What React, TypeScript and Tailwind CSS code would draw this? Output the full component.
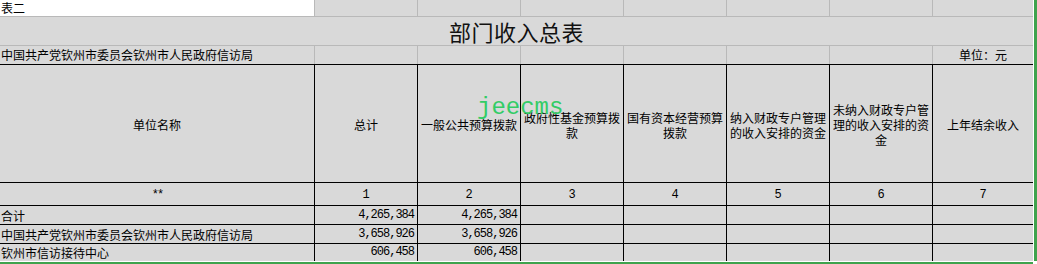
import React from "react";

const cjk = { fontFamily: '"Noto Sans CJK SC", "Noto Sans", sans-serif' };
const mono = { fontFamily: '"Liberation Mono", "DejaVu Sans Mono", monospace' };

// column widths incl. right border line
const widths = ["w-[315px]", "w-[103px]", "w-[103px]", "w-[103px]", "w-[103px]", "w-[103px]", "w-[103px]", "w-[100px]"];

const headers = [
  "单位名称",
  "总计",
  "一般公共预算拨款",
  "政府性基金预算拨款",
  "国有资本经营预算拨款",
  "纳入财政专户管理的收入安排的资金",
  "未纳入财政专户管理的收入安排的资金",
  "上年结余收入",
];

const rows = [
  { name: "合计", total: "4,265,384", general: "4,265,384" },
  { name: "中国共产党钦州市委员会钦州市人民政府信访局", total: "3,658,926", general: "3,658,926" },
  { name: "钦州市信访接待中心", total: "606,458", general: "606,458" },
];

export default function App() {
  return (
    <div className="relative w-[1037px] h-[264px] bg-white overflow-hidden">
      <div className="flex">
        <div className="w-[1033px] shrink-0 bg-[#d9d9d9]">
          {/* row 1 */}
          <div className="flex h-[17px]">
            {widths.map((w, i) => (
              <div
                key={i}
                className={`${w} shrink-0 flex items-center pl-[1px] text-[12px] border-b border-b-[#b9b9b9] ${
                  i < 7 ? "border-r border-r-[#b9b9b9]" : ""
                } ${i === 0 ? "bg-white" : "bg-[#d9d9d9]"}`}
                style={cjk}
              >
                {i === 0 ? "表二" : null}
              </div>
            ))}
          </div>

          {/* title */}
          <div
            className="h-[29px] flex items-center justify-center border-b border-b-[#b9b9b9] text-[22px] text-[#111] tracking-[0.5px] pt-[1px]"
            style={cjk}
          >
            部门收入总表
          </div>

          {/* row 3 */}
          <div className="flex h-[19px] border-b border-b-black">
            {widths.map((w, i) => (
              <div
                key={i}
                className={`${w} shrink-0 flex items-center text-[12px] whitespace-nowrap ${
                  i < 7 ? "border-r border-r-[#b9b9b9]" : ""
                } ${i === 7 ? "justify-center" : "pl-[1px]"}`}
                style={cjk}
              >
                {i === 0 ? "中国共产党钦州市委员会钦州市人民政府信访局" : i === 7 ? "单位：元" : null}
              </div>
            ))}
          </div>

          {/* header */}
          <div className="flex h-[118px] border-b border-b-black">
            {headers.map((h, i) => (
              <div
                key={i}
                className={`${widths[i]} shrink-0 flex items-center justify-center text-center text-[12px] leading-[15px] pt-[2px] ${
                  i < 7 ? "border-r border-r-black" : ""
                }`}
                style={cjk}
              >
                <span className="block w-full break-all">{h}</span>
              </div>
            ))}
          </div>

          {/* index row */}
          <div className="flex h-[23px] border-b border-b-black">
            {["**", "1", "2", "3", "4", "5", "6", "7"].map((t, i) => (
              <div
                key={i}
                className={`${widths[i]} shrink-0 flex items-center justify-center text-[12px] pt-[2px] ${
                  i < 7 ? "border-r border-r-black" : ""
                } ${i === 0 ? "tracking-[-2px]" : ""}`}
                style={mono}
              >
                {t}
              </div>
            ))}
          </div>

          {/* data rows */}
          {rows.map((r, ri) => (
            <div key={ri} className={`flex ${ri === 2 ? "h-[17px]" : "h-[19px] border-b border-b-black"}`}>
              {widths.map((w, i) => (
                <div
                  key={i}
                  className={`${w} shrink-0 flex items-end pb-[1px] text-[12px] leading-[15px] whitespace-nowrap ${
                    i < 7 ? "border-r border-r-black" : ""
                  } ${i === 0 ? "pl-[1px]" : "justify-end pr-[3px]"}`}
                  style={i === 0 ? cjk : { ...mono, letterSpacing: "-1px" }}
                >
                  {i === 0 ? r.name : i === 1 ? r.total : i === 2 ? r.general : null}
                </div>
              ))}
            </div>
          ))}
        </div>
        <div className="w-[1px] shrink-0 h-[261px] bg-white" />
        <div className="w-[3px] shrink-0 h-[261px] bg-[#3fa34d]" />
      </div>
      <div className="h-[1px] bg-white" />
      <div className="h-[2px] w-[1033px] bg-[#3fa34d]" />

      {/* watermark */}
      <div
        className="absolute left-[477px] top-[96px] text-[24px] leading-[24px] text-[#33cc66] pointer-events-none"
        style={mono}
      >
        jeecms
      </div>
    </div>
  );
}
